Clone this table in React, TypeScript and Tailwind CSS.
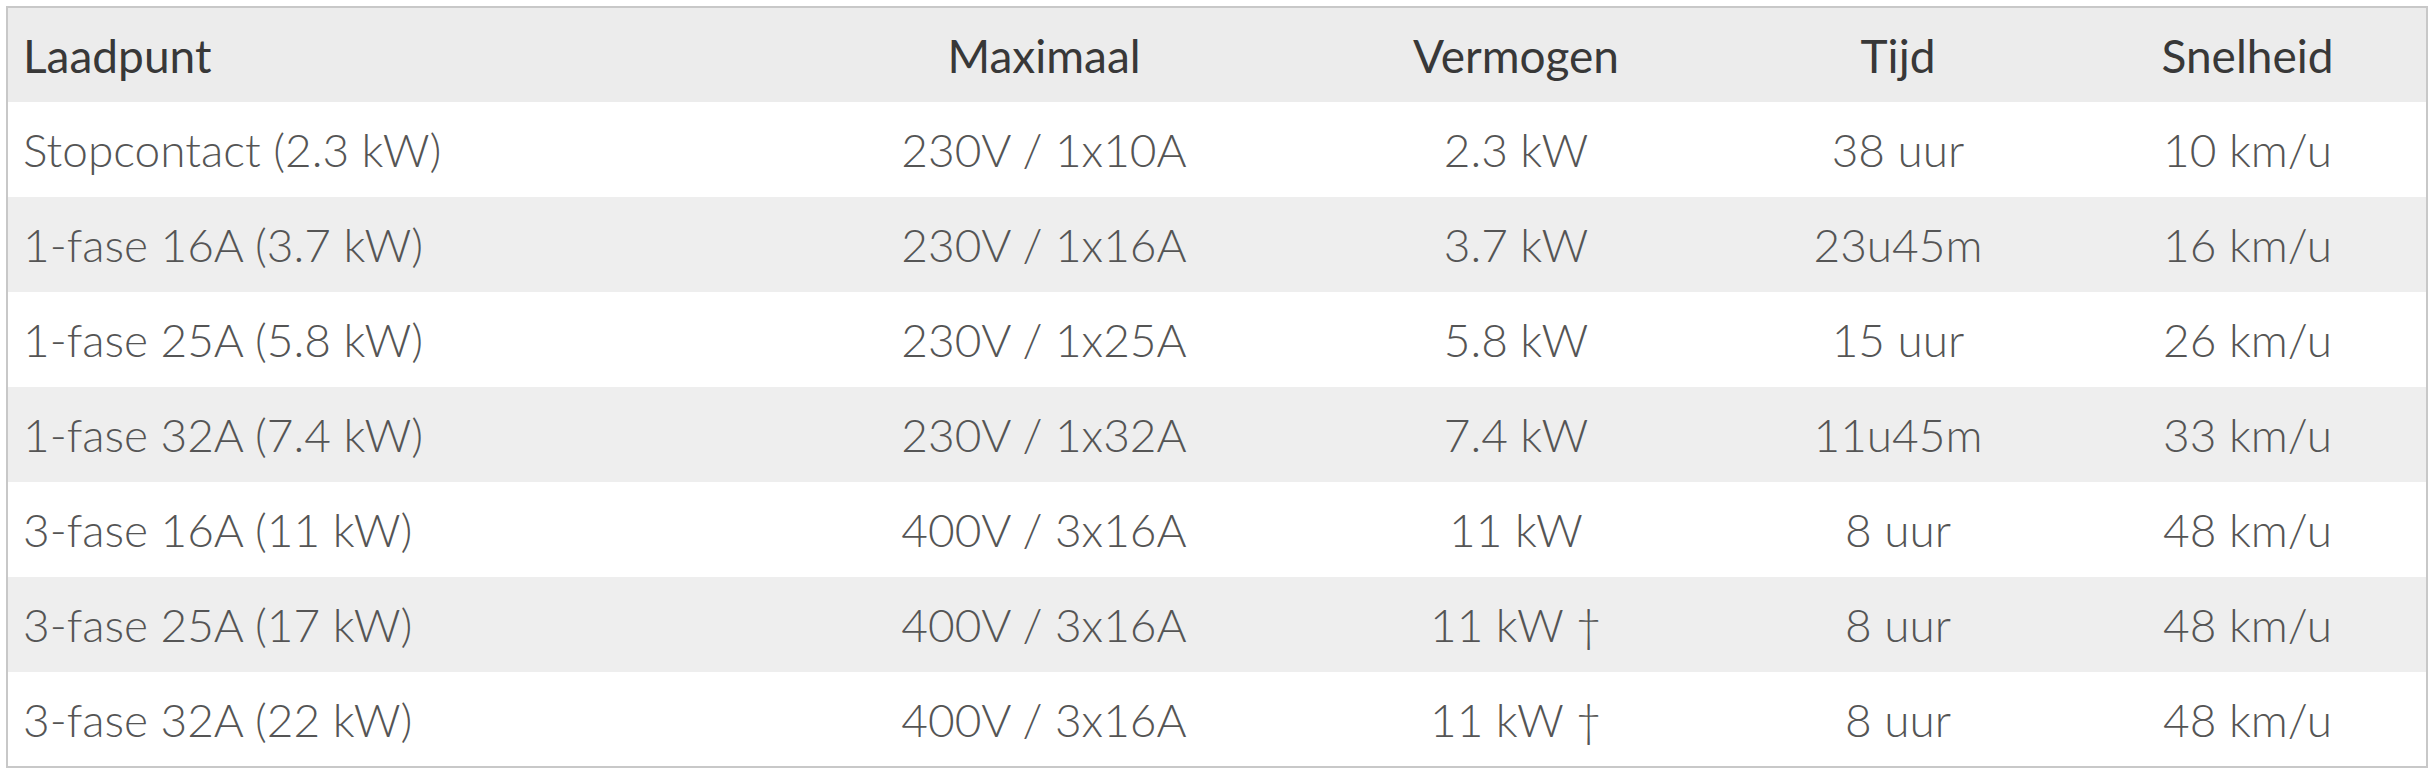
const rows = [
  ["Stopcontact (2.3 kW)", "230V / 1x10A", "2.3 kW", "38 uur", "10 km/u"],
  ["1-fase 16A (3.7 kW)", "230V / 1x16A", "3.7 kW", "23u45m", "16 km/u"],
  ["1-fase 25A (5.8 kW)", "230V / 1x25A", "5.8 kW", "15 uur", "26 km/u"],
  ["1-fase 32A (7.4 kW)", "230V / 1x32A", "7.4 kW", "11u45m", "33 km/u"],
  ["3-fase 16A (11 kW)", "400V / 3x16A", "11 kW", "8 uur", "48 km/u"],
  ["3-fase 25A (17 kW)", "400V / 3x16A", "11 kW †", "8 uur", "48 km/u"],
  ["3-fase 32A (22 kW)", "400V / 3x16A", "11 kW †", "8 uur", "48 km/u"],
];

const headers = ["Laadpunt", "Maximaal", "Vermogen", "Tijd", "Snelheid"];

export default function App() {
  return (
    <div className="w-[2430px] h-[770px] bg-white pt-[6px] pl-[6px] font-['Lato',sans-serif]">
      <table className="table-fixed border-collapse border-2 border-[#c8c8c8] w-[2422px]">
        <colgroup>
          <col className="w-[776px]" />
          <col className="w-[522px]" />
          <col className="w-[422px]" />
          <col className="w-[342px]" />
          <col className="w-[358px]" />
        </colgroup>
        <thead>
          <tr className="h-[95px] bg-[#ececec]">
            {headers.map((h, i) => (
              <th
                key={h}
                className={`text-[46px] font-normal text-[#383838] ${
                  i === 0 ? "text-left pl-[15px]" : "text-center"
                }`}
              >
                {h}
              </th>
            ))}
          </tr>
        </thead>
        <tbody>
          {rows.map((r, ri) => (
            <tr
              key={ri}
              className={`h-[95px] ${ri % 2 === 1 ? "bg-[#eeeeee]" : "bg-white"}`}
            >
              {r.map((c, i) => (
                <td
                  key={i}
                  className={`text-[46px] font-light text-[#555555] ${
                    i === 0 ? "text-left pl-[15px]" : "text-center"
                  }`}
                >
                  {c}
                </td>
              ))}
            </tr>
          ))}
        </tbody>
      </table>
    </div>
  );
}
